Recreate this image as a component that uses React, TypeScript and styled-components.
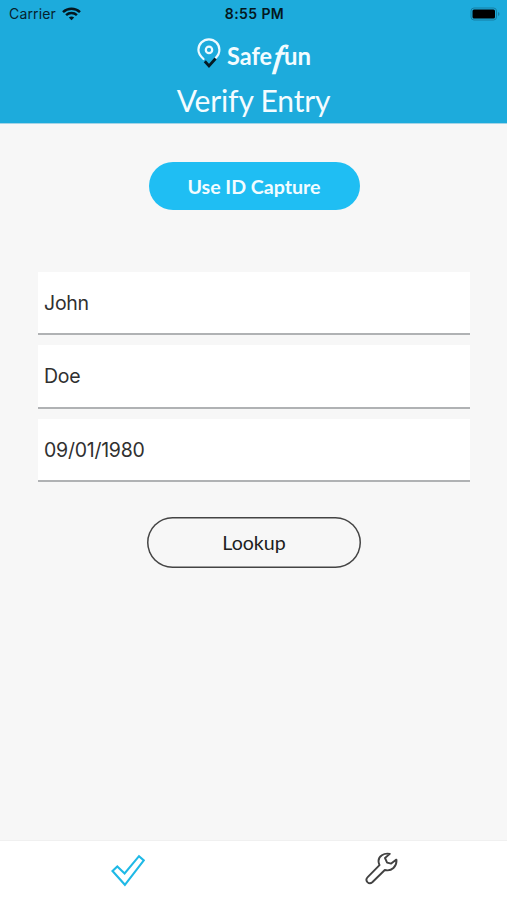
import React, { useState } from "react";
import styled, { createGlobalStyle } from "styled-components";

const GlobalStyle = createGlobalStyle`
  * { box-sizing: border-box; }
  body { margin: 0; background: #f7f7f7; }
`;

const Screen = styled.div`
  display: flex;
  flex-direction: column;
  width: 100%;
  height: 100vh;
  min-height: 900px;
  background: #f7f7f7;
  font-family: Lato, sans-serif;
`;

const Header = styled.header`
  display: flex;
  flex-direction: column;
  align-items: center;
  height: 124px;
  background: #1dabdc;
  border-bottom: 1px solid #a5d4e6;
`;

const StatusBar = styled.div`
  display: grid;
  grid-template-columns: 1fr auto 1fr;
  align-items: center;
  width: 100%;
  height: 27px;
  padding: 0 7px 0 9px;
  color: #06222d;
  font-family: Inter, sans-serif;
  font-size: 14px;
`;

const Carrier = styled.div`
  display: flex;
  align-items: center;
  gap: 6px;
  letter-spacing: 0.15px;
`;

const Clock = styled.time`
  color: #041720;
  font-weight: 600;
  font-size: 14px;
  letter-spacing: 0.4px;
`;

const BatterySlot = styled.div`
  display: flex;
  justify-content: flex-end;
`;

const Logo = styled.svg`
  display: block;
  margin-top: 7px;
  flex: none;
`;

const Title = styled.h1`
  margin: 4px 0 0;
  color: #f4fcff;
  font-size: 30px;
  font-weight: 400;
  line-height: 36px;
  letter-spacing: -0.15px;
`;

const Main = styled.main`
  display: flex;
  flex: 1;
  flex-direction: column;
  align-items: center;
  padding: 38px 37px 0 38px;
`;

const PillButton = styled.button<{ $outlined?: boolean }>`
  width: ${(p) => (p.$outlined ? 214 : 211)}px;
  height: ${(p) => (p.$outlined ? 51 : 48)}px;
  padding: 2px 0 0;
  border: 0;
  box-shadow: ${(p) => (p.$outlined ? "inset 0 0 0 1.5px #444" : "none")};
  border-radius: 26px;
  background: ${(p) => (p.$outlined ? "transparent" : "#1fbef3")};
  color: ${(p) => (p.$outlined ? "#202020" : "#f2fcff")};
  font-family: Lato, sans-serif;
  font-size: 19.6px;
  font-weight: ${(p) => (p.$outlined ? 400 : 700)};
  line-height: 24px;
`;

const Form = styled.form`
  display: flex;
  flex-direction: column;
  align-items: center;
  width: 100%;
  margin-top: 62px;
`;

const Fields = styled.div`
  display: grid;
  gap: 10px;
  width: 100%;
  margin-bottom: 35px;
`;

const Field = styled.input`
  width: 100%;
  height: 63.3px;
  padding: 1px 6px 0;
  border: 0;
  border-bottom: 2px solid #b0b2b4;
  border-radius: 0;
  outline: 0;
  background: #fff;
  color: #303030;
  font-family: Inter, sans-serif;
  font-size: 19.5px;
  letter-spacing: -0.25px;
`;

const TabBar = styled.nav`
  display: grid;
  grid-template-columns: 1fr 1fr;
  height: 60px;
  border-top: 1px solid #f0f0f0;
  background: #fff;
`;

const Tab = styled.button<{ $active?: boolean }>`
  display: flex;
  align-items: flex-start;
  justify-content: center;
  padding: ${(p) => (p.$active ? "13px 0 0 3px" : "11px 0 0 3px")};
  border: 0;
  background: none;
  color: ${(p) => (p.$active ? "#1fb9e6" : "#424242")};
`;

const WifiIcon = () => (
  <svg width="19" height="14" viewBox="0 0 19 14" fill="none" stroke="#04171f" strokeWidth="2.5">
    <path d="M1 5.1C5.8.6 13.2.6 18 5.1" />
    <path d="M4.1 8.2c3-2.8 7.8-2.8 10.8 0" />
    <path d="M6.8 10.5c1.6-1.4 3.8-1.4 5.4 0L9.5 13.3Z" fill="#04171f" stroke="none" />
  </svg>
);

const BatteryIcon = () => (
  <svg width="30" height="14" viewBox="0 0 30 14">
    <rect x="1" y="1" width="25.5" height="12" rx="3" fill="none" stroke="#167fa3" strokeWidth="1" />
    <rect x="2.5" y="2.5" width="22.5" height="9" rx="1.5" fill="#000" />
    <path d="M28 5v4q1.5-.7 1.5-2T28 5Z" fill="#167fa3" />
  </svg>
);

const SafefunLogo = () => (
  <Logo width="116" height="44" viewBox="0 0 116 44" role="img" aria-label="Safefun">
    <path
      d="M7.5 25C4.4 22.2 2.4 18.8 2.4 15.8a10.5 10.5 0 0 1 21 0c0 3.2-1.6 6.2-4 8.4"
      fill="none" stroke="#eefaff" strokeWidth="2.2" strokeLinecap="round"
    />
    <circle cx="13" cy="15.9" r="3.2" fill="none" stroke="#eefaff" strokeWidth="2.2" />
    <path d="m8.8 27.2 4.2 4.7 6.6-7.4" fill="none" stroke="#061b24" strokeWidth="2.8" />
    <g fill="#f3fcff" fontFamily="Lato, sans-serif" fontSize="24" fontWeight="700">
      <text x="31" y="31" textLength="45" lengthAdjust="spacingAndGlyphs">Safe</text>
      <text
        transform="translate(77 33) skewX(-7)"
        fontFamily="Liberation Serif, serif"
        fontStyle="italic"
        fontSize="31"
        fontWeight="400"
        stroke="#f3fcff"
        strokeWidth="1.2"
      >
        f
      </text>
      <text x="88" y="31" textLength="27" lengthAdjust="spacingAndGlyphs">un</text>
    </g>
  </Logo>
);

const CheckIcon = () => (
  <svg width="34" height="33" viewBox="0 0 34 33" fill="none" stroke="currentColor" strokeWidth="2.1">
    <path d="m1.5 17 4.8-4.6 7.3 7.1L28 2.2l4.8 4.2L13.9 30.8Z" />
  </svg>
);

const WrenchIcon = () => (
  <svg width="34" height="34" viewBox="0 0 34 34" fill="none" stroke="currentColor" strokeWidth="1.9" strokeLinejoin="round">
    <path d="M24.8 1.9C18.7.7 13.6 4.3 13.5 8.9c0 1.6.5 2.8 1 4.2L2.7 25.2c-1.6 1.6-1.5 3.6-.3 4.9 1.4 1.4 3.4 1.5 4.9.2L19.8 18c6.8 1.9 12.4-3.6 11.6-10.4l-5.2 4-4.1-1L20 6Z" />
  </svg>
);

const initialFields = [
  { label: "First name", value: "John" },
  { label: "Last name", value: "Doe" },
  { label: "Date of birth", value: "09/01/1980" },
];

export default function App() {
  const [fields, setFields] = useState(initialFields);

  const updateField = (index: number, value: string) =>
    setFields((current) => current.map((field, i) => (i === index ? { ...field, value } : field)));

  return (
    <Screen>
      <GlobalStyle />
      <Header>
        <StatusBar>
          <Carrier>Carrier <WifiIcon /></Carrier>
          <Clock>8:55 PM</Clock>
          <BatterySlot><BatteryIcon /></BatterySlot>
        </StatusBar>
        <SafefunLogo />
        <Title>Verify Entry</Title>
      </Header>
      <Main>
        <PillButton type="button">Use ID Capture</PillButton>
        <Form onSubmit={(event) => event.preventDefault()}>
          <Fields>
            {fields.map((field, index) => (
              <Field
                key={field.label}
                aria-label={field.label}
                value={field.value}
                onChange={(event) => updateField(index, event.target.value)}
              />
            ))}
          </Fields>
          <PillButton type="submit" $outlined>Lookup</PillButton>
        </Form>
      </Main>
      <TabBar>
        <Tab $active aria-label="Verify"><CheckIcon /></Tab>
        <Tab aria-label="Settings"><WrenchIcon /></Tab>
      </TabBar>
    </Screen>
  );
}
